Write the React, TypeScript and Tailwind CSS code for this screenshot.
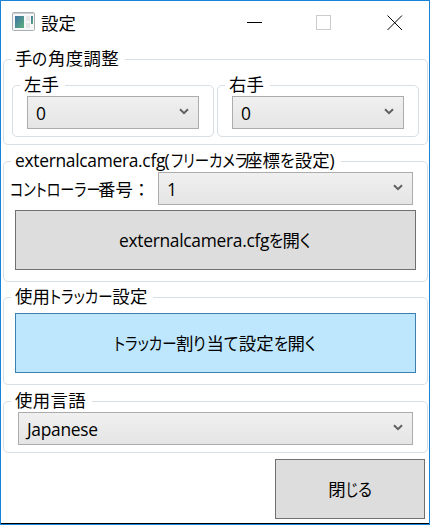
import type { ReactNode } from "react";

function Run({ children, width, scale }: { children: ReactNode; width: string; scale: string }) {
  return (
    <span className={`inline-block whitespace-nowrap ${width}`}>
      <span className={`inline-block origin-left [font-feature-settings:'palt'] ${scale}`}>{children}</span>
    </span>
  );
}

function Chevron() {
  return (
    <svg width="10" height="8" viewBox="0 0 10 8" className="mr-[9px] -mt-[2px] shrink-0">
      <path d="M1 1.2L5 5.2L9 1.2" fill="none" stroke="#606060" strokeWidth="2" />
    </svg>
  );
}

function Combo({ value, className }: { value: string; className: string }) {
  return (
    <div
      className={`flex h-[33px] shrink-0 items-center justify-between border border-[#acacac] bg-linear-to-b from-[#f0f0f0] to-[#e5e5e5] pl-2 ${className}`}
    >
      <span className="mt-px tracking-[-0.3px]">{value}</span>
      <Chevron />
    </div>
  );
}

function Group({ label, className, children }: { label: ReactNode; className: string; children: ReactNode }) {
  return (
    <section className={`flex shrink-0 flex-col items-start rounded-[5px] border border-[#d5dfe5] ${className}`}>
      <h2 className="-mt-[14px] ml-[7px] flex h-6 shrink-0 items-center bg-white pr-[6px] pl-1 whitespace-nowrap">{label}</h2>
      {children}
    </section>
  );
}

export default function App() {
  return (
    <div className="flex h-[525px] w-[430px] flex-col overflow-hidden border border-[#1883d7] bg-white font-['Open_Sans','Noto_Sans_CJK_JP',sans-serif] text-[17.4px] leading-6 text-black">
      <header className="flex h-[58px] shrink-0 items-start">
        <svg width="23" height="20" viewBox="0 0 23 20" className="mt-[11px] ml-[11px]">
          <defs>
            <linearGradient id="pane" x1="0" y1="0" x2="1" y2="1">
              <stop offset="0" stopColor="#3f72a5" />
              <stop offset="1" stopColor="#5db07c" />
            </linearGradient>
          </defs>
          <rect x="0.5" y="0.5" width="22" height="18" rx="1" fill="#f7f7f7" stroke="#a9aeb2" />
          <path d="M1 1.5H22" stroke="#c8d0d5" />
          <rect x="3" y="4" width="9" height="12" fill="url(#pane)" />
          <rect x="14" y="4" width="4" height="5" fill="#e6e6e6" />
          <rect x="14" y="11" width="4" height="5" fill="#e6e6e6" />
          <rect x="19" y="4" width="2" height="8" fill="url(#pane)" />
        </svg>
        <h1 className="mt-[10px] ml-[6px]">設定</h1>
        <svg width="156" height="16" viewBox="0 0 156 16" className="mt-[14px] mr-[26px] ml-auto" fill="none">
          <path d="M0 7.5H15" stroke="#000" shapeRendering="crispEdges" />
          <rect x="69.5" y="0.5" width="14" height="14" stroke="#cccccc" />
          <path d="M140.5 0.5L155 15M155 0.5L140.5 15" stroke="#000" />
        </svg>
      </header>

      <main className="flex flex-1 flex-col pl-[2px]">
        <Group
          className="h-[86px] w-[425px]"
          label={
            <>
              手
              <Run width="w-[15.5px]" scale="scale-x-90">の</Run>
              <span className="tracking-[0.4px]">角度調整</span>
            </>
          }
        >
          <div className="mt-[15px] ml-2 flex gap-[3px]">
            <Group className="h-[52px] w-[202px]" label="左手">
              <Combo value="0" className="ml-[14px] w-[172px]" />
            </Group>
            <Group className="h-[52px] w-[202px]" label="右手">
              <Combo value="0" className="ml-[14px] w-[172px]" />
            </Group>
          </div>
        </Group>

        <Group
          className="mt-4 h-[121px] w-[425px]"
          label={
            <>
              <span className="w-[149.5px] tracking-[-0.3px]">externalcamera.cfg</span>
              <span className="w-[6px]">(</span>
              <Run width="w-[74.5px]" scale="scale-x-83">フリーカメラ</Run>
              座標
              <Run width="w-[15px]" scale="scale-x-90">を</Run>
              設定)
            </>
          }
        >
          <div className="flex items-center">
            <span className="ml-[6px] flex w-[148px] shrink-0">
              <Run width="w-[88px]" scale="scale-x-81">コントローラー</Run>
              番号：
            </span>
            <Combo value="1" className="w-[255px]" />
          </div>
          <button className="mt-[5px] ml-[11px] flex h-[60px] w-[401px] items-center justify-center border border-[#707070] bg-[#dddddd]">
            <span className="w-[149.5px] tracking-[-0.3px]">externalcamera.cfg</span>
            <Run width="w-[14px]" scale="scale-x-88">を</Run>
            開
            <Run width="w-[12px]" scale="scale-x-90">く</Run>
          </button>
        </Group>

        <Group
          className="mt-[15px] h-[88px] w-[425px]"
          label={
            <>
              使用
              <Run width="w-[62.5px]" scale="scale-x-83">トラッカー</Run>
              <span className="tracking-[0.2px]">設定</span>
            </>
          }
        >
          <button className="mt-[5px] ml-[11px] flex h-[60px] w-[401px] items-center justify-center border border-[#3c7fb1] bg-[#bee6fd]">
            <Run width="w-[62px]" scale="scale-x-83">トラッカー</Run>
            割
            <Run width="w-[13px]" scale="scale-x-88">り</Run>
            当
            <Run width="w-[15px]" scale="scale-x-90">て</Run>
            設定
            <Run width="w-[14px]" scale="scale-x-88">を</Run>
            開
            <Run width="w-[12px]" scale="scale-x-90">く</Run>
          </button>
        </Group>

        <Group className="mt-4 h-[52px] w-[425px]" label={<span className="tracking-[0.4px]">使用言語</span>}>
          <Combo value="Japanese" className="ml-[14px] w-[395px]" />
        </Group>

        <button className="mt-[6px] mr-1 flex h-[60px] w-[150px] shrink-0 items-center justify-center self-end border border-[#707070] bg-[#dddddd]">
          閉
          <Run width="w-[12px]" scale="scale-x-80">じ</Run>
          <Run width="w-[14px]" scale="scale-x-90">る</Run>
        </button>
      </main>
      <div className="h-px shrink-0 bg-black" />
    </div>
  );
}
